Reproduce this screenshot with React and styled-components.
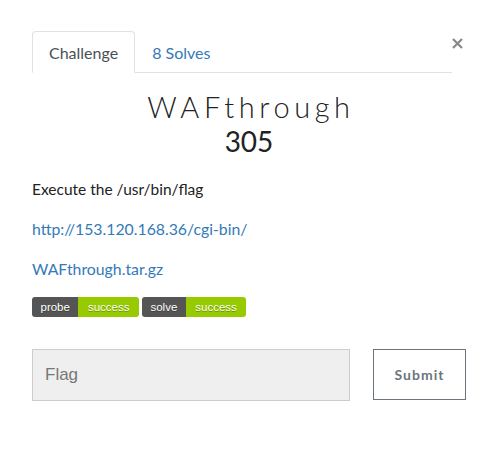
import React from 'react';
import styled, { createGlobalStyle } from 'styled-components';

const GlobalStyle = createGlobalStyle`
  body {
    margin: 0;
    background: #fff;
    font-family: Lato, "Open Sans", sans-serif;
    color: #212529;
  }
`;

const Modal = styled.div`
  width: 434px;
  padding: 31px 0 0 32px;
`;

const Header = styled.div`
  display: flex;
  align-items: flex-start;
  justify-content: space-between;
`;

const Tabs = styled.ul`
  display: flex;
  width: 420px;
  margin: 0;
  padding: 0;
  list-style: none;
  border-bottom: 1px solid #dee2e6;
`;

const Tab = styled.li`
  margin-bottom: -1px;
  padding: 0 16px;
  height: 40px;
  display: flex;
  align-items: center;
  font-size: 16px;
  border: 1px solid ${p => (p.$active ? '#dee2e6' : 'transparent')};
  border-bottom-color: ${p => (p.$active ? '#fff' : 'transparent')};
  border-radius: 4px 4px 0 0;
  background: ${p => (p.$active ? '#fff' : 'transparent')};
  color: ${p => (p.$active ? '#495057' : '#337ab7')};
`;

const Close = styled.button`
  margin: 7px 3px 0 0;
  padding: 0;
  border: 0;
  background: none;
  display: flex;
`;

const Title = styled.h3`
  margin: 16px 0 0;
  padding-left: 4px;
  text-align: center;
  font-family: Lato, sans-serif;
  font-weight: 300;
  font-size: 29px;
  letter-spacing: 4.6px;
  line-height: 36px;
  color: #222;
`;

const Points = styled.h4`
  margin: 0;
  text-align: center;
  font-weight: 400;
  font-size: 28px;
  line-height: 32px;
  color: #222;
`;

const Description = styled.div`
  margin-top: 20px;
  font-size: 15.5px;
  line-height: 24px;
  color: #222;

  p {
    margin: 0 0 16px;
  }

  a {
    font-size: 15.8px;
    color: #337ab7;
    text-decoration: none;
  }
`;

const Badges = styled.div`
  display: flex;
  gap: 3px;
  margin-top: 6px;
`;

const Badge = styled.span`
  display: inline-flex;
  height: 20px;
  border-radius: 3px;
  overflow: hidden;
  font-family: "Liberation Sans", Arial, sans-serif;
  font-size: 11.5px;
  line-height: 20px;
  color: #fff;
  text-shadow: 0 1px 0 rgba(1, 1, 1, 0.3);
`;

const BadgePart = styled.span`
  padding: 0 ${p => p.$pad}px;
  background: ${p => p.$bg};
`;

const SubmitRow = styled.form`
  display: flex;
  gap: 23px;
  margin-top: 32px;
`;

const FlagInput = styled.input`
  box-sizing: border-box;
  width: 318px;
  height: 52px;
  padding: 0 12px;
  border: 1px solid #ccc;
  background: #efefef;
  font-family: "Liberation Sans", Arial, sans-serif;
  font-size: 17px;
  outline: none;

  &::placeholder {
    color: #777;
  }
`;

const SubmitButton = styled.button`
  box-sizing: border-box;
  width: 93px;
  height: 51px;
  border: 1px solid #6c757d;
  background: #fff;
  font-family: Lato, sans-serif;
  font-weight: 700;
  font-size: 14px;
  letter-spacing: 1px;
  color: #6c757d;
`;

const badges = [
  { label: 'probe', status: 'success' },
  { label: 'solve', status: 'success' },
];

export default function App() {
  return (
    <>
      <GlobalStyle />
      <Modal>
        <Header>
          <Tabs>
            <Tab $active>Challenge</Tab>
            <Tab>8 Solves</Tab>
          </Tabs>
          <Close aria-label="Close">
            <svg width="11" height="11" viewBox="0 0 11 11">
              <path d="M1 1L10 10M10 1L1 10" stroke="#888" strokeWidth="2.2" />
            </svg>
          </Close>
        </Header>
        <Title>WAFthrough</Title>
        <Points>305</Points>
        <Description>
          <p>Execute the /usr/bin/flag</p>
          <p>
            <a href="#">http://153.120.168.36/cgi-bin/</a>
          </p>
          <p>
            <a href="#">WAFthrough.tar.gz</a>
          </p>
        </Description>
        <Badges>
          {badges.map(b => (
            <Badge key={b.label}>
              <BadgePart $bg="#555" $pad={8.5}>{b.label}</BadgePart>
              <BadgePart $bg="#97ca00" $pad={9.5}>{b.status}</BadgePart>
            </Badge>
          ))}
        </Badges>
        <SubmitRow onSubmit={e => e.preventDefault()}>
          <FlagInput placeholder="Flag" />
          <SubmitButton type="submit">Submit</SubmitButton>
        </SubmitRow>
      </Modal>
    </>
  );
}
